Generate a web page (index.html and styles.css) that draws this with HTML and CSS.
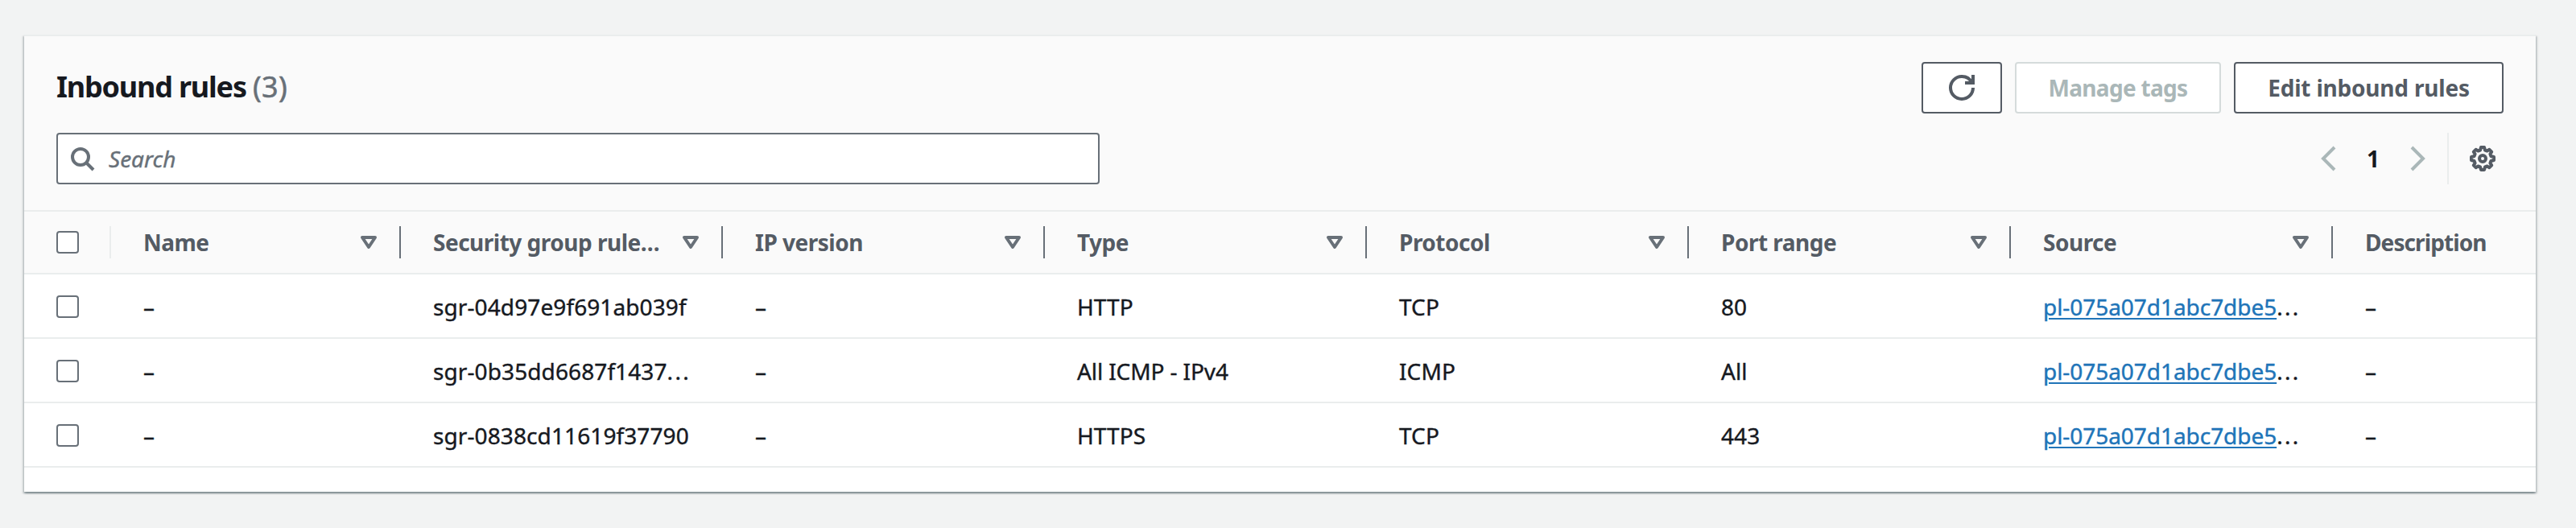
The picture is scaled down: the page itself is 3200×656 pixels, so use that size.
FILE: index.html
```html
<!DOCTYPE html>
<html lang="en">
<head>
    <meta charset="UTF-8">
    <meta name="viewport" content="width=device-width, initial-scale=1.0">
    <title>Inbound rules</title>
    <link rel="stylesheet" href="styles.css">
</head>
<body>
    <!-- Shared icons -->
    <svg class="sprite" width="0" height="0">
        <symbol id="sort" viewBox="0 0 16 16"><path d="M4 5h8l-4 6-4-6z"/></symbol>
    </svg>

    <section class="panel">
        <header class="panel-header">
            <div class="title-row">
                <h2 class="title">Inbound rules <span class="counter">(3)</span></h2>
                <div class="actions">
                    <button class="btn btn-refresh" aria-label="Refresh">
                        <svg class="icon" viewBox="0 0 16 16">
                            <path d="M10 5h5V0"/>
                            <path d="M15 8a6.957 6.957 0 0 1-7 7 6.957 6.957 0 0 1-7-7 6.957 6.957 0 0 1 7-7 6.87 6.87 0 0 1 6.3 4"/>
                        </svg>
                    </button>
                    <button class="btn btn-tags" disabled>Manage tags</button>
                    <button class="btn btn-edit">Edit inbound rules</button>
                </div>
            </div>
            <div class="tools-row">
                <div class="search">
                    <svg class="icon" viewBox="0 0 16 16"><circle cx="7" cy="7" r="5"/><path d="m15 15-4.5-4.5"/></svg>
                    <span class="placeholder">Search</span>
                </div>
                <div class="tools">
                    <svg class="icon arrow" viewBox="0 0 16 16"><path d="M12 1 5 8l7 7"/></svg>
                    <span class="page">1</span>
                    <svg class="icon arrow" viewBox="0 0 16 16"><path d="m4 1 7 7-7 7"/></svg>
                    <span class="settings">
                        <svg class="icon" viewBox="0 0 16 16">
                            <path d="M7 1H9L9.5 2.8 10.8 3.3 12.2 2.4 13.6 3.8 12.7 5.2 13.2 6.5 15 7V9L13.2 9.5 12.7 10.8 13.6 12.2 12.2 13.6 10.8 12.7 9.5 13.2 9 15H7L6.5 13.2 5.2 12.7 3.8 13.6 2.4 12.2 3.3 10.8 2.8 9.5 1 9V7L2.8 6.5 3.3 5.2 2.4 3.8 3.8 2.4 5.2 3.3 6.5 2.8z" stroke-linejoin="round"/>
                            <circle cx="8" cy="8" r="2"/>
                        </svg>
                    </span>
                </div>
            </div>
        </header>

        <div class="table">
            <div class="row head">
                <div class="check"><span class="box"></span></div>
                <div class="cell">Name<svg class="icon"><use href="#sort"/></svg></div>
                <div class="cell">Security group rule…<svg class="icon"><use href="#sort"/></svg></div>
                <div class="cell">IP version<svg class="icon"><use href="#sort"/></svg></div>
                <div class="cell">Type<svg class="icon"><use href="#sort"/></svg></div>
                <div class="cell">Protocol<svg class="icon"><use href="#sort"/></svg></div>
                <div class="cell">Port range<svg class="icon"><use href="#sort"/></svg></div>
                <div class="cell">Source<svg class="icon"><use href="#sort"/></svg></div>
                <div class="cell last">Description</div>
            </div>
            <div class="row">
                <div class="check"><span class="box"></span></div>
                <div class="cell">–</div>
                <div class="cell">sgr-04d97e9f691ab039f</div>
                <div class="cell">–</div>
                <div class="cell">HTTP</div>
                <div class="cell">TCP</div>
                <div class="cell">80</div>
                <div class="cell"><a class="link">pl-075a07d1abc7dbe5</a><span class="dots">...</span></div>
                <div class="cell">–</div>
            </div>
            <div class="row">
                <div class="check"><span class="box"></span></div>
                <div class="cell">–</div>
                <div class="cell">sgr-0b35dd6687f1437<span class="dots">...</span></div>
                <div class="cell">–</div>
                <div class="cell type">All ICMP - IPv4</div>
                <div class="cell">ICMP</div>
                <div class="cell">All</div>
                <div class="cell"><a class="link">pl-075a07d1abc7dbe5</a><span class="dots">...</span></div>
                <div class="cell">–</div>
            </div>
            <div class="row">
                <div class="check"><span class="box"></span></div>
                <div class="cell">–</div>
                <div class="cell">sgr-0838cd11619f37790</div>
                <div class="cell">–</div>
                <div class="cell">HTTPS</div>
                <div class="cell">TCP</div>
                <div class="cell">443</div>
                <div class="cell"><a class="link">pl-075a07d1abc7dbe5</a><span class="dots">...</span></div>
                <div class="cell">–</div>
            </div>
        </div>
    </section>
</body>
</html>
```
FILE: styles.css
```css
* {
    box-sizing: border-box;
}
body {
    margin: 0;
    padding: 43px 50px 0 30px;
    height: 656px;
    background: #f2f3f3;
    color: #16191f;
    font-family: "Noto Sans", sans-serif;
    font-size: 28px;
    line-height: 44px;
    overflow: hidden;
}
.sprite {
    display: none;
}
.icon {
    width: 32px;
    height: 32px;
    flex: none;
    fill: none;
    stroke: currentColor;
    stroke-width: 2;
}
.panel {
    height: 568px;
    background: #fff;
    border-top: 2px solid #eaeded;
    box-shadow: 0 2px 2px rgba(0, 28, 36, 0.3), 2px 2px 2px rgba(0, 28, 36, 0.15), -2px 2px 2px rgba(0, 28, 36, 0.15);
}
.panel-header {
    height: 218px;
    padding: 32px 40px 0;
    background: #fafafa;
    border-bottom: 2px solid #eaeded;
}
.title-row,
.tools-row {
    display: flex;
    justify-content: space-between;
    height: 64px;
}
.tools-row {
    margin-top: 24px;
}
.title {
    margin: 0;
    font-size: 36px;
    line-height: 62px;
    letter-spacing: -1.2px;
}
.counter {
    color: #687078;
    font-weight: 400;
    letter-spacing: 0.3px;
    -webkit-text-stroke: 0.5px currentColor;
}
.actions {
    display: flex;
    gap: 16px;
}
.btn {
    display: flex;
    align-items: center;
    justify-content: center;
    height: 64px;
    padding: 0;
    background: #fff;
    border: 2px solid #545b64;
    border-radius: 4px;
    color: #545b64;
    font: 700 28px/40px "Noto Sans", sans-serif;
    letter-spacing: -0.2px;
}
.btn:disabled {
    border-color: #d5dbdb;
    color: #aab7b8;
}
.btn-refresh {
    width: 100px;
}
.btn-tags {
    width: 256px;
    letter-spacing: -0.7px;
}
.btn-edit {
    width: 335px;
}
.search {
    display: flex;
    align-items: center;
    gap: 17px;
    width: 1296px;
    padding-left: 14px;
    background: #fff;
    border: 2px solid #687078;
    border-radius: 4px;
    color: #687078;
}
.placeholder {
    font-style: italic;
    -webkit-text-stroke: 0.4px currentColor;
}
.tools {
    display: flex;
    align-items: center;
}
.arrow {
    color: #aab7b8;
}
.page {
    width: 80px;
    text-align: center;
    font-weight: 700;
}
.settings {
    display: flex;
    align-items: center;
    height: 64px;
    margin-left: 20px;
    padding: 0 10px 0 26px;
    border-left: 2px solid #eaeded;
    color: #545b64;
}
.row {
    display: grid;
    grid-template-columns: 108px 360px repeat(6, 400px) 252px;
    height: 80px;
    padding-top: 2px;
    align-items: center;
    border-bottom: 2px solid #eaeded;
    letter-spacing: 0.1px;
    -webkit-text-stroke: 0.4px currentColor;
}
.head {
    height: 78px;
    padding-top: 0;
    background: #fafafa;
    color: #545b64;
    font-weight: 700;
    letter-spacing: -0.5px;
    -webkit-text-stroke: 0;
}
.check {
    display: flex;
    align-items: center;
    height: 40px;
    padding-left: 40px;
}
.box {
    width: 28px;
    height: 28px;
    background: #fff;
    border: 2px solid #687078;
    border-radius: 4px;
}
.cell {
    padding-left: 40px;
    white-space: nowrap;
}
.type {
    letter-spacing: -0.1px;
}
.head .check {
    border-right: 2px solid #eaeded;
}
.head .cell {
    display: flex;
    align-items: center;
    justify-content: space-between;
    height: 40px;
    padding-right: 22px;
    border-right: 2px solid #687078;
}
.head .last {
    border-right: 0;
    letter-spacing: -0.9px;
}
.head .icon {
    color: #687078;
    stroke-linejoin: round;
}
.link {
    color: #2074b8;
    letter-spacing: -0.05px;
    text-decoration: underline;
    text-decoration-thickness: 2px;
    text-underline-offset: 3px;
}
.dots {
    letter-spacing: 2.3px;
}
```
